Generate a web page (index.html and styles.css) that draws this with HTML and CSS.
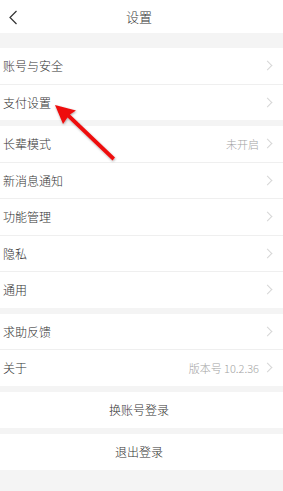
FILE: index.html
```html
<!DOCTYPE html>
<html lang="zh">
<head>
<meta charset="utf-8">
<link rel="stylesheet" href="styles.css">
</head>
<body>
<div class="page">
  <header class="topbar">
    <svg class="back" width="10" height="15" viewBox="0 0 10 15"><path d="M8.5 1 L2 7.5 L8.5 14" fill="none" stroke="#333" stroke-width="1.2"/></svg>
    <div class="title">设置</div>
  </header>
  <div class="gap gap-top"></div>
  <section class="group">
    <div class="row"><span class="label">账号与安全</span><span class="right"><i class="chev"></i></span></div>
    <div class="row"><span class="label">支付设置</span><span class="right"><i class="chev"></i></span></div>
  </section>
  <div class="gap"></div>
  <section class="group">
    <div class="row"><span class="label">长辈模式</span><span class="right"><span class="value">未开启</span><i class="chev"></i></span></div>
    <div class="row"><span class="label">新消息通知</span><span class="right"><i class="chev"></i></span></div>
    <div class="row"><span class="label">功能管理</span><span class="right"><i class="chev"></i></span></div>
    <div class="row"><span class="label">隐私</span><span class="right"><i class="chev"></i></span></div>
    <div class="row"><span class="label">通用</span><span class="right"><i class="chev"></i></span></div>
  </section>
  <div class="gap"></div>
  <section class="group">
    <div class="row"><span class="label">求助反馈</span><span class="right"><i class="chev"></i></span></div>
    <div class="row"><span class="label">关于</span><span class="right"><span class="value">版本号 10.2.36</span><i class="chev"></i></span></div>
  </section>
  <div class="gap"></div>
  <div class="button">换账号登录</div>
  <div class="gap"></div>
  <div class="button">退出登录</div>
  <svg class="arrow" width="283" height="491" viewBox="0 0 283 491">
    <defs>
      <filter id="sh" x="-20%" y="-20%" width="140%" height="140%">
        <feDropShadow dx="0.5" dy="1" stdDeviation="1" flood-color="#000" flood-opacity="0.35"/>
      </filter>
    </defs>
    <g filter="url(#sh)" fill="#ee1111">
      <polygon points="55,105 76,110.5 70,114.5 115,157.5 112.5,160.5 67.5,117.5 63,124"/>
    </g>
  </svg>
</div>
</body>
</html>
```
FILE: styles.css
```css
html, body {
  margin: 0;
  padding: 0;
}
body {
  background: #f4f4f4;
  font-family: "Noto Sans CJK SC", "Noto Sans", sans-serif;
  font-weight: 300;
  color: #333;
}
.page {
  position: relative;
  width: 283px;
  height: 491px;
  overflow: hidden;
  background: #f4f4f4;
}
.topbar {
  height: 33px;
  background: #fff;
  display: flex;
  align-items: center;
  justify-content: center;
  position: relative;
  padding-right: 5px;
}
.back {
  position: absolute;
  left: 8px;
  top: 10px;
}
.title {
  font-size: 13px;
  line-height: 33px;
  color: #333;
}
.gap {
  height: 6px;
}
.gap-top {
  height: 15px;
}
.group {
  background: #fff;
}
.row {
  height: 35.5px;
  display: flex;
  align-items: center;
  justify-content: space-between;
  padding-left: 3px;
  padding-right: 11px;
  border-bottom: 1px solid #efefef;
  box-sizing: content-box;
}
.row:last-child {
  border-bottom: none;
}
.label {
  font-size: 12px;
  color: #333;
}
.right {
  display: flex;
  align-items: center;
}
.value {
  font-size: 11px;
  color: #a3a3a3;
  margin-right: 5px;
}
.chev {
  display: block;
  width: 6px;
  height: 6px;
  border-top: 1px solid #d6d6d6;
  border-right: 1px solid #d6d6d6;
  transform: rotate(45deg);
  margin-right: 1px;
}
.button {
  height: 36px;
  background: #fff;
  display: flex;
  align-items: center;
  justify-content: center;
  padding-right: 5px;
  font-size: 12px;
  color: #333;
}
.arrow {
  position: absolute;
  left: 0;
  top: 0;
  pointer-events: none;
}
```
